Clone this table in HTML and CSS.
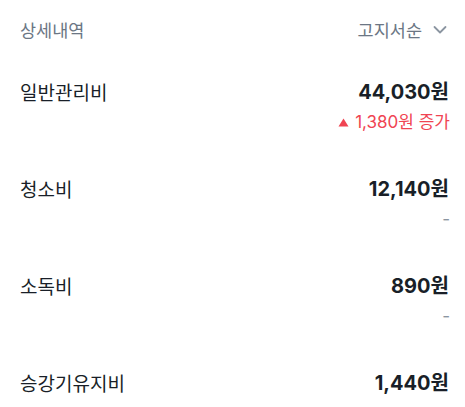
FILE: index.html
```html
<!DOCTYPE html>
<html lang="ko">
<head>
<meta charset="utf-8">
<link rel="stylesheet" href="styles.css">
</head>
<body>
<div class="page">
  <div class="header">
    <span class="title">상세내역</span>
    <span class="sort">고지서순
      <svg class="chev" width="14" height="10" viewBox="0 0 14 10"><path d="M1.5 2 L7 7.5 L12.5 2" fill="none" stroke="#8b95a1" stroke-width="1.8" stroke-linecap="round" stroke-linejoin="round"/></svg>
    </span>
  </div>
  <div class="list">
    <div class="row">
      <div class="main"><span class="name">일반관리비</span><span class="amount">44,030원</span></div>
      <div class="sub up"><svg class="tri" width="11" height="9" viewBox="0 0 11 9"><path d="M5.5 0.5 L10.5 8.5 L0.5 8.5 Z" fill="#f04452"/></svg>1,380원 증가</div>
    </div>
    <div class="row">
      <div class="main"><span class="name">청소비</span><span class="amount">12,140원</span></div>
      <div class="sub dash">-</div>
    </div>
    <div class="row">
      <div class="main"><span class="name">소독비</span><span class="amount">890원</span></div>
      <div class="sub dash">-</div>
    </div>
    <div class="row">
      <div class="main"><span class="name">승강기유지비</span><span class="amount">1,440원</span></div>
    </div>
  </div>
</div>
</body>
</html>
```
FILE: styles.css
```css
html, body { margin: 0; padding: 0; background: #fff; }
body { font-family: "Noto Sans CJK KR", "Noto Sans", sans-serif; color: #191f28; }
.page { padding: 0 16px 0 20px; }
.header { display: flex; justify-content: space-between; align-items: center; padding: 18px 0 13px; height: 24px; }
.title { font-size: 17.5px; color: #6b7684; line-height: 24px; }
.sort { font-size: 17.5px; color: #6b7684; line-height: 24px; display: flex; align-items: center; gap: 11px; padding-right: 2px; }
.chev { display: block; }
.row { padding: 24px 0 17px; }
.main { display: flex; justify-content: space-between; align-items: center; height: 26px; }
.name { font-size: 19px; line-height: 26px; }
.amount { font-family: "Inter", "Noto Sans CJK KR", sans-serif; font-size: 20px; font-weight: 700; line-height: 26px; }
.sub { margin-top: 4px; margin-right: -1px; height: 26px; line-height: 26px; display: flex; justify-content: flex-end; align-items: center; font-family: "Inter", "Noto Sans CJK KR", sans-serif; font-size: 17px; }
.up { color: #f04452; }
.tri { display: block; margin-right: 6px; }
.dash { color: #8b95a1; }
```
